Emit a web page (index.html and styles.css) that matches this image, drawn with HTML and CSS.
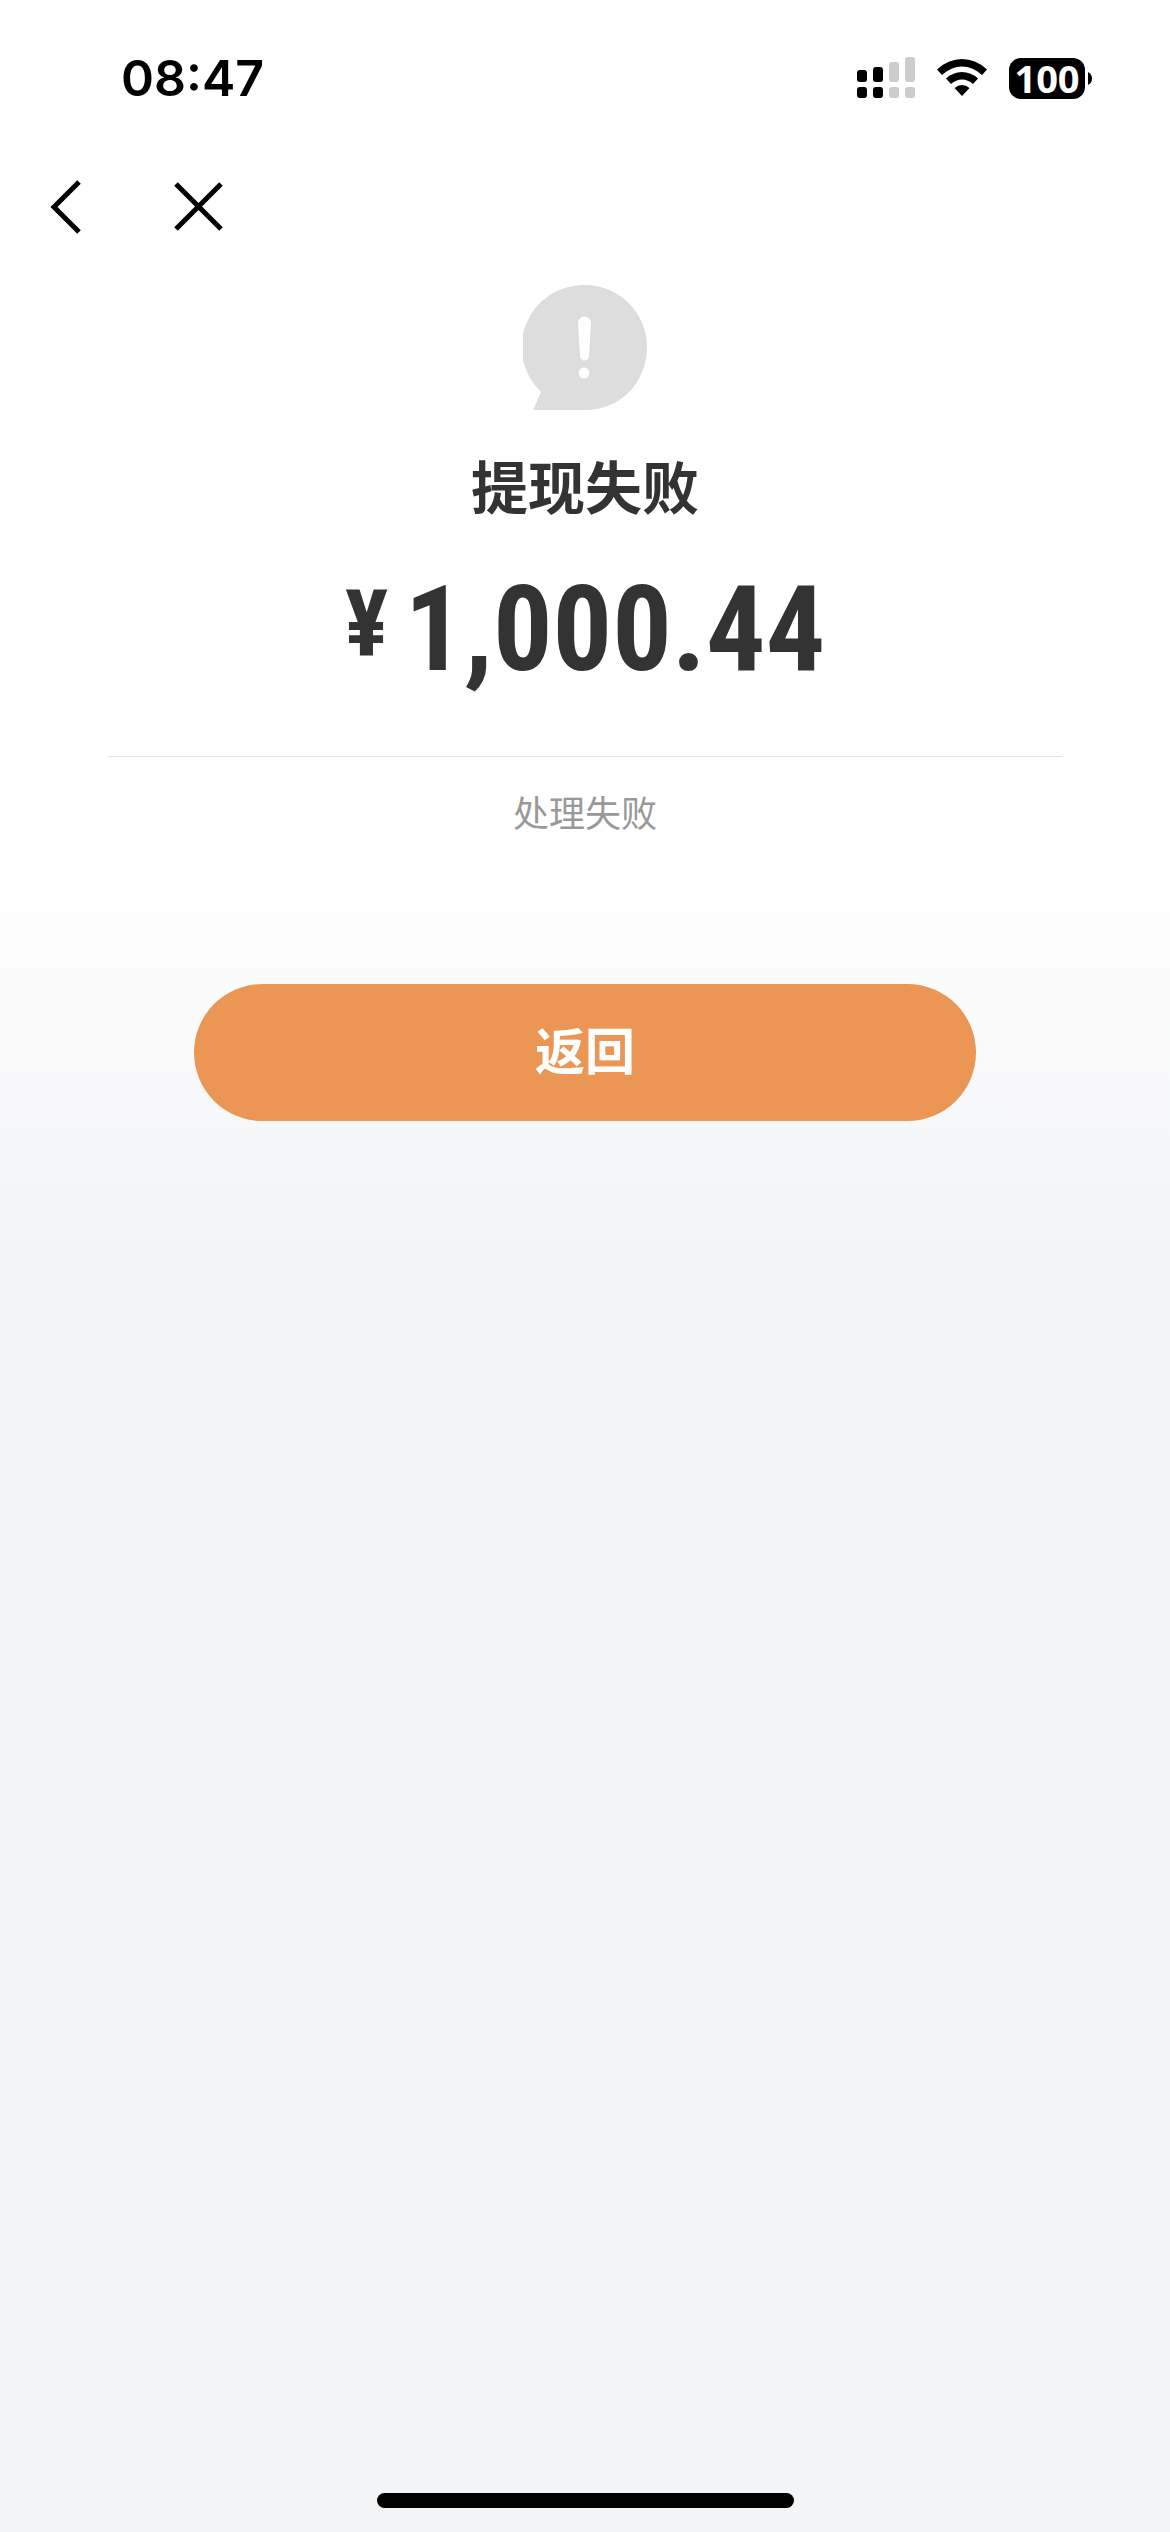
FILE: index.html
```html
<!doctype html>
<html lang="zh-CN">
<head>
    <title>提现失败</title>
    <meta charset="utf-8"/>
    <meta name="viewport" content="width=device-width, initial-scale=1"/>
    <link rel="stylesheet" href="styles.css">
</head>
<body>
<div class="status-bar">
    <span class="time">08:47</span>
    <div class="status-icons">
        <svg class="signal" width="58" height="42" viewBox="0 0 58 42">
            <rect x="0" y="13" width="10" height="12" rx="3"/>
            <rect x="16" y="10" width="10" height="15" rx="3"/>
            <rect x="0" y="30" width="10" height="11" rx="3"/>
            <rect x="16" y="30" width="10" height="11" rx="3"/>
            <g fill="#ccc">
                <rect x="32" y="5" width="10" height="20" rx="3"/>
                <rect x="48" y="0" width="10" height="25" rx="3"/>
                <rect x="32" y="30" width="10" height="11" rx="3"/>
                <rect x="48" y="30" width="10" height="11" rx="3"/>
            </g>
        </svg>
        <svg class="wifi" width="50" height="38" viewBox="0 0 50 38">
            <path d="M0 10.500Q11 0 25 0Q39 0 50 10.500L45 16Q36 7.500 25 7.500Q14 7.500 5 16Z"/>
            <path d="M9 19.500Q16 13 25 13Q34 13 41 19.500L36 25Q31 20.500 25 20.500Q19 20.500 14 25Z"/>
            <path d="M17.500 29Q21 26 25 26Q29 26 32.500 29L25 37Z"/>
        </svg>
        <div class="battery">
            <span class="battery-level">100</span>
            <svg width="4" height="13" viewBox="0 0 4 13"><path d="M0 0Q4 2 4 6.500T0 13Z"/></svg>
        </div>
    </div>
</div>

<nav class="nav-bar">
    <button class="nav-btn" type="button" aria-label="返回上一页">
        <svg width="32" height="56" viewBox="0 0 32 56"><path d="M29 3L4 28L29 53"/></svg>
    </button>
    <button class="nav-btn" type="button" aria-label="关闭">
        <svg width="50" height="56" viewBox="0 0 50 56"><path d="M2 5L47 50M47 5L2 50"/></svg>
    </button>
</nav>

<main class="result">
    <svg class="result-icon" width="124" height="125" viewBox="0 0 124 125">
        <path fill="#ddd" d="M62 0A62 62 0 0 1 124 62C124 97 98 125 62 125H10L18 107A62 62 0 0 1 62 0Z"/>
        <path fill="#fff" d="M55 38a6.500 6.500 0 0 1 13 0L66 71a4.500 4.500 0 0 1-9 0Z"/>
        <circle fill="#fff" cx="61" cy="88" r="5.500"/>
    </svg>
    <h1 class="result-title">提现失败</h1>
    <p class="amount"><span class="currency">¥</span><span>1,000.44</span></p>
    <p class="result-note">处理失败</p>
    <button class="back-btn" type="button">返回</button>
</main>

<div class="home-indicator"></div>
</body>
</html>
```
FILE: styles.css
```css
body {
    display: flex;
    flex-direction: column;
    min-height: 100vh;
    margin: 0;
    background: linear-gradient(#fff 850px, #f3f4f6 1250px);
    color: #333;
    font-family: "Noto Sans CJK SC", sans-serif;
}
h1, p {
    margin: 0;
}
svg {
    display: block;
}
.status-bar {
    display: flex;
    justify-content: space-between;
    align-items: center;
    height: 156px;
    padding: 0 78px 0 121px;
    color: #000;
}
.time {
    font: 600 50px/60px Inter, sans-serif;
}
.status-icons {
    display: flex;
    align-items: center;
    gap: 22px;
}
.battery {
    display: flex;
    align-items: center;
    gap: 3px;
}
.battery-level {
    width: 76px;
    border-radius: 12px;
    background: #000;
    color: #fff;
    font: 700 38px/41px "Open Sans", sans-serif;
    text-align: center;
}
.nav-bar {
    display: flex;
    gap: 92px;
    padding: 23px 50px;
}
.nav-btn {
    padding: 0;
    border: 0;
    background: none;
}
.nav-btn path {
    fill: none;
    stroke: #000;
    stroke-width: 5;
}
.result {
    display: flex;
    flex-direction: column;
    align-items: center;
    padding: 27px 108px;
}
.result-title {
    margin-top: 32px;
    font-size: 57px;
    font-weight: 700;
    line-height: 84px;
}
.amount {
    display: flex;
    gap: 16px;
    margin-top: 42px;
    font: 700 118px/124px "Roboto Condensed", Roboto, sans-serif;
}
.currency {
    font-size: 92px;
    line-height: 114px;
}
.result-note {
    align-self: stretch;
    margin-top: 64px;
    padding-top: 28px;
    border-top: 1px solid #e5e5e5;
    color: #999;
    font-size: 36px;
    line-height: 52px;
    text-align: center;
}
.back-btn {
    width: 82%;
    margin-top: 147px;
    padding: 0 0 8px;
    border: 0;
    border-radius: 69px;
    background: #eb9655;
    color: #fff;
    font: 700 50px/129px "Noto Sans CJK SC", sans-serif;
}
.home-indicator {
    width: 417px;
    height: 15px;
    margin: auto auto 24px;
    border-radius: 8px;
    background: #000;
}
```
